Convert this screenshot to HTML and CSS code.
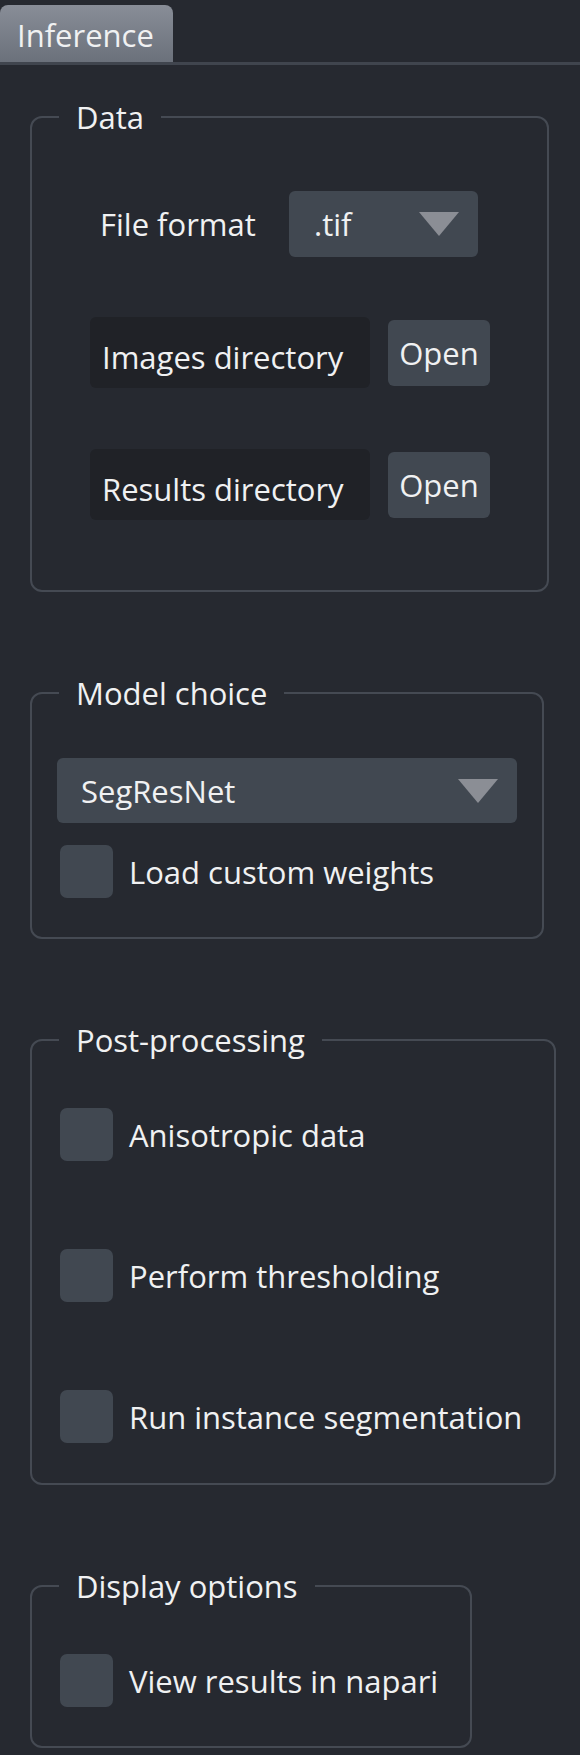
FILE: index.html
```html
<!DOCTYPE html>
<html>
<head>
<meta charset="utf-8">
<link rel="stylesheet" href="styles.css">
</head>
<body>
<div class="tabbar">
  <div class="tab">Inference</div>
</div>
<main class="panel">
  <fieldset class="group group-data">
    <legend>Data</legend>
    <div class="group-body">
      <div class="row row-format">
        <span class="label label-format">File format</span>
        <div class="combo combo-format">
          <span>.tif</span>
          <svg class="arrow" width="40" height="24" viewBox="0 0 40 24"><polygon points="0,0 40,0 20,24"/></svg>
        </div>
      </div>
      <div class="row row-dir">
        <div class="pathbox">Images directory</div>
        <button class="btn">Open</button>
      </div>
      <div class="row row-dir">
        <div class="pathbox">Results directory</div>
        <button class="btn">Open</button>
      </div>
    </div>
  </fieldset>

  <fieldset class="group group-model">
    <legend>Model choice</legend>
    <div class="group-body">
      <div class="combo combo-model">
        <span>SegResNet</span>
        <svg class="arrow" width="40" height="24" viewBox="0 0 40 24"><polygon points="0,0 40,0 20,24"/></svg>
      </div>
      <label class="check check-first">
        <span class="box"></span>
        <span class="check-text">Load custom weights</span>
      </label>
    </div>
  </fieldset>

  <fieldset class="group group-post">
    <legend>Post-processing</legend>
    <div class="group-body check-list">
      <label class="check">
        <span class="box"></span>
        <span class="check-text">Anisotropic data</span>
      </label>
      <label class="check">
        <span class="box"></span>
        <span class="check-text">Perform thresholding</span>
      </label>
      <label class="check">
        <span class="box"></span>
        <span class="check-text">Run instance segmentation</span>
      </label>
    </div>
  </fieldset>

  <fieldset class="group group-display">
    <legend>Display options</legend>
    <div class="group-body">
      <label class="check">
        <span class="box"></span>
        <span class="check-text">View results in napari</span>
      </label>
    </div>
  </fieldset>
</main>
</body>
</html>
```
FILE: styles.css
```css
* {
  box-sizing: border-box;
}

html,
body {
  margin: 0;
  padding: 0;
  background: #262930;
}

body {
  width: 580px;
  height: 1755px;
  overflow: hidden;
  font-family: "Open Sans", "Noto Sans", sans-serif;
  font-size: 31px;
  color: #f0f1f2;
}

/* ---------- tab bar ---------- */
.tabbar {
  display: flex;
  height: 65px;
  padding-top: 5px;
  border-bottom: 3px solid #40454e;
}

.tab {
  display: flex;
  align-items: center;
  height: 57px;
  padding: 3px 19px 0 17px;
  background: linear-gradient(#888d97, #6b717b);
  border-radius: 8px 8px 0 0;
  line-height: 1;
}

/* ---------- panel ---------- */
.panel {
  display: flex;
  flex-direction: column;
  align-items: flex-start;
  padding: 35px 0 0 30px;
}

.group {
  margin: 0 0 84px 0;
  padding: 0;
  min-width: 0;
  border: 2px solid #454a53;
  border-radius: 12px;
}

.group legend {
  margin-left: 27px;
  padding: 0 17px;
  height: 34px;
  line-height: 34px;
}

.group-data {
  width: 519px;
  padding-top: 57px;
  padding-bottom: 70px;
}

.group-data .group-body {
  padding-left: 58px;
}

.group-model {
  width: 514px;
  padding-top: 48px;
  padding-bottom: 39px;
}

.group-model .group-body {
  padding-left: 25px;
}

.group-post {
  width: 526px;
  padding-top: 51px;
  padding-bottom: 40px;
}

.group-post .group-body {
  padding-left: 28px;
}

.group-display {
  width: 442px;
  margin-bottom: 0;
  padding-top: 51px;
  padding-bottom: 39px;
}

.group-display .group-body {
  padding-left: 28px;
}

/* ---------- rows ---------- */
.row {
  display: flex;
  align-items: center;
}

.row-format {
  height: 66px;
  margin-left: 10px;
}

.label-format {
  width: 189px;
  flex: none;
}

.row-dir {
  height: 71px;
  margin-top: 60px;
}

.row-dir + .row-dir {
  margin-top: 61px;
}

.pathbox {
  display: flex;
  align-items: center;
  width: 280px;
  height: 71px;
  padding: 8px 12px 0 12px;
  background: #202227;
  border-radius: 6px;
  white-space: nowrap;
}

.btn {
  width: 102px;
  height: 66px;
  margin-left: 18px;
  padding: 0;
  border: none;
  border-radius: 6px;
  background: #414851;
  color: #f0f1f2;
  font: inherit;
}

/* ---------- combo ---------- */
.combo {
  display: flex;
  align-items: center;
  justify-content: space-between;
  padding: 0 19px 0 25px;
  background: #414851;
  border-radius: 6px;
}

.combo-format {
  width: 189px;
  height: 66px;
}

.combo-model {
  width: 460px;
  height: 65px;
  padding-left: 24px;
}

.arrow {
  display: block;
  fill: #8b8e95;
}

/* ---------- checkboxes ---------- */
.check {
  display: flex;
  align-items: center;
  height: 53px;
  white-space: nowrap;
}

.check-first {
  margin-top: 22px;
  margin-left: 3px;
}

.box {
  width: 53px;
  height: 53px;
  flex: none;
  background: #414851;
  border-radius: 7px;
}

.check-text {
  margin-left: 16px;
}

.check-list {
  display: flex;
  flex-direction: column;
  gap: 88px;
}
```
